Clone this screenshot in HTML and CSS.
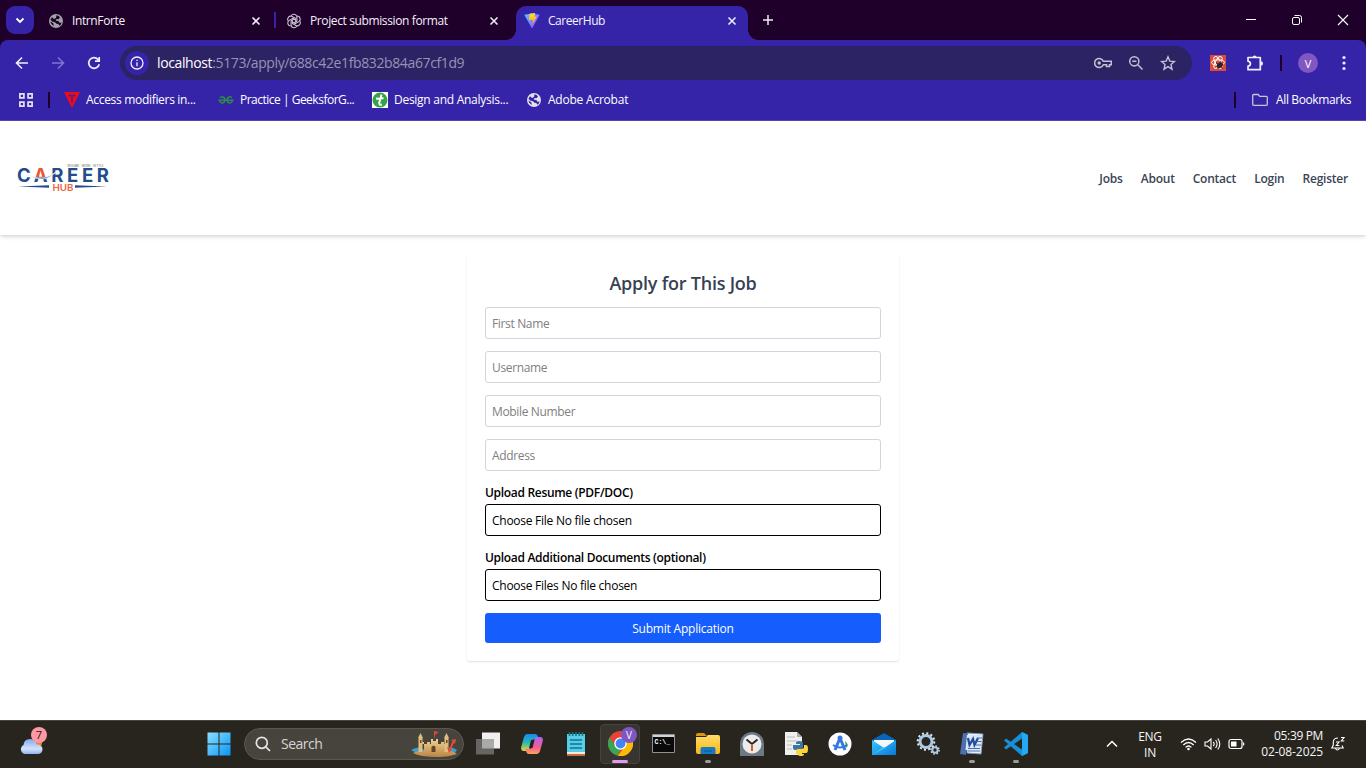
FILE: index.html
```html
<!DOCTYPE html>
<html lang="en">
<head>
<meta charset="utf-8">
<title>CareerHub</title>
<link rel="stylesheet" href="styles.css">
</head>
<body>
<svg class="defs" width="0" height="0" aria-hidden="true">
  <defs>
    <linearGradient id="win" x1="0" y1="0" x2="1" y2="1"><stop offset="0" stop-color="#8be0ff"/><stop offset="1" stop-color="#0795f8"/></linearGradient>
    <linearGradient id="vite" x1="0" y1="0" x2="1" y2="1"><stop offset="0" stop-color="#41d1ff"/><stop offset="1" stop-color="#bd34fe"/></linearGradient>
    <linearGradient id="bolt" x1="0" y1="0" x2="0" y2="1"><stop offset="0" stop-color="#ffdf45"/><stop offset="1" stop-color="#ffa800"/></linearGradient>
    <linearGradient id="cloud" x1="0" y1="0" x2="0" y2="1"><stop offset="0" stop-color="#7fa9ee"/><stop offset=".65" stop-color="#d2e3fc"/><stop offset="1" stop-color="#8fb3ef"/></linearGradient>
    <linearGradient id="cop1" x1="0" y1="0" x2="0" y2="1"><stop offset="0" stop-color="#1689f0"/><stop offset=".5" stop-color="#28b7b5"/><stop offset="1" stop-color="#eed32e"/></linearGradient>
    <linearGradient id="cop2" x1="0" y1="0" x2="0" y2="1"><stop offset="0" stop-color="#ae62f4"/><stop offset=".6" stop-color="#f45b94"/><stop offset="1" stop-color="#ffa35c"/></linearGradient>
    <linearGradient id="sand" x1="0" y1="0" x2="0" y2="1"><stop offset="0" stop-color="#f0d190"/><stop offset="1" stop-color="#b98546"/></linearGradient>
    <linearGradient id="folder" x1="0" y1="0" x2="0" y2="1"><stop offset="0" stop-color="#ffdc67"/><stop offset="1" stop-color="#fbb716"/></linearGradient>
    <linearGradient id="mail" x1="0" y1="0" x2="1" y2="1"><stop offset="0" stop-color="#38c8fb"/><stop offset="1" stop-color="#0878d6"/></linearGradient>
    <linearGradient id="logo-a" gradientUnits="userSpaceOnUse" x1="0" y1="0" x2="0" y2="30"><stop offset=".47" stop-color="#e75a36"/><stop offset=".47" stop-color="#214d8c"/></linearGradient>
    <symbol id="globe" viewBox="0 0 16 16"><circle cx="8" cy="8" r="7" fill="currentColor"/><path d="M8.500 2.300q2.500.500 3.500 2.300l-1.500 1.700-2-.300-.800 1.500 3 .800 1 1.800 2-.500q-.600 2.200-2.200 3.200l-1.200-1.800-1.800-.200L7 9.300l-2.500-.500-2-2q.500-1.500 1.500-2.500l2 1.700L8 5z" fill="var(--globe-ink)"/><path d="M2.300 8.500l3 1.700.500 2.800q-2.800-1-3.500-4.500z" fill="var(--globe-ink)"/></symbol>
    <symbol id="close" viewBox="0 0 10 10"><path d="M1.500 1.500l7 7m0-7l-7 7" fill="none" stroke="#eeeaf5" stroke-width="1.600"/></symbol>
  </defs>
</svg>

<div class="screen">
  <div class="tabstrip">
    <button class="tab-search" aria-label="Search tabs"><svg width="10" height="7" viewBox="0 0 10 7"><path d="M1.500 1.500L5 5l3.500-3.500" fill="none" stroke="#fff" stroke-width="1.800"/></svg></button>
    <div class="tab first">
      <svg class="fav grey" width="16" height="16"><use href="#globe"/></svg>
      <span class="t1">IntrnForte</span>
      <svg class="x" width="10" height="10"><use href="#close"/></svg>
    </div>
    <div class="tab second">
      <svg class="fav" width="16" height="16" viewBox="-8 -8 16 16" fill="none" stroke="#ccc5d5" stroke-width="1.100">
        <g id="petal"><path d="M-2.800-5.300a3.100 3.100 0 0 1 5.700 1V.300L0 1.900"/></g>
        <use href="#petal" transform="rotate(60)"/><use href="#petal" transform="rotate(120)"/><use href="#petal" transform="rotate(180)"/><use href="#petal" transform="rotate(240)"/><use href="#petal" transform="rotate(300)"/>
      </svg>
      <span class="t2">Project submission format</span>
      <svg class="x" width="10" height="10"><use href="#close"/></svg>
    </div>
    <div class="tab active">
      <svg class="fav" width="16" height="16" viewBox="0 0 16 16"><path d="M.300 1.800L8 .500l7.700 1.300L8 15.500z" fill="url(#vite)"/><path d="M5.500.800l5.700-.800-.800 3.500 2.300.200-4.200 7.300.400-4.200-4 .300z" fill="url(#bolt)"/></svg>
      <span class="t3">CareerHub</span>
      <svg class="x" width="10" height="10"><use href="#close"/></svg>
    </div>
    <svg class="newtab" width="12" height="12" viewBox="0 0 12 12"><path d="M6 1v10M1 6h10" stroke="#eeeaf5" stroke-width="1.500"/></svg>
    <div class="window-buttons">
      <svg width="12" height="12" viewBox="0 0 12 12"><path d="M1 5.500h10" stroke="#fff"/></svg>
      <svg width="12" height="12" viewBox="0 0 12 12" fill="none" stroke="#fff"><rect x="1.500" y="3.500" width="7" height="7" rx="1.500"/><path d="M3.500 1.500h5a2 2 0 0 1 2 2v5"/></svg>
      <svg width="12" height="12" viewBox="0 0 12 12"><path d="M1 1l10 10M11 1L1 11" stroke="#fff" stroke-width="1.100"/></svg>
    </div>
  </div>

  <div class="chrome">
    <div class="toolbar">
      <div class="nav-buttons">
        <svg width="16" height="16" viewBox="0 0 16 16" fill="none" stroke="#f1eefb" stroke-width="1.600"><path d="M14 8H3M8 2.500L2.500 8 8 13.500"/></svg>
        <svg width="16" height="16" viewBox="0 0 16 16" fill="none" stroke="#8175ce" stroke-width="1.600"><path d="M2 8h11M8 2.500L13.500 8 8 13.500"/></svg>
        <svg width="16" height="16" viewBox="0 0 16 16" fill="none" stroke="#f1eefb" stroke-width="1.700"><path d="M13.200 9.200A5.300 5.300 0 1 1 12 4.500l1 1.200M13.200 2v4.200H9"/></svg>
      </div>
      <div class="omnibox">
        <span class="site-info"><svg width="14" height="14" viewBox="0 0 14 14" fill="none" stroke="#f1eefb" stroke-width="1.300"><circle cx="7" cy="7" r="6"/><path d="M7 6.200V10.200M7 3.700v1.400"/></svg></span>
        <span class="url"><b>localhost</b>:5173/apply/688c42e1fb832b84a67cf1d9</span>
        <span class="omni-icons">
          <svg width="18" height="12" viewBox="0 0 18 12" fill="none" stroke="#c4c0d2" stroke-width="1.500"><path d="M9.300 4.300A4.500 4.500 0 1 0 9.300 7.700h3.200v1.800h3V7.700h1.800V4.300z"/><circle cx="5.200" cy="6" r="1.700" fill="#c4c0d2" stroke="none"/></svg>
          <svg width="16" height="16" viewBox="0 0 16 16" fill="none" stroke="#c4c0d2" stroke-width="1.500"><circle cx="6.300" cy="6.300" r="4.600"/><path d="M9.800 9.800l4.700 4.700M4.200 6.300h4.200"/></svg>
          <svg width="16" height="16" viewBox="0 0 16 16" fill="none" stroke="#c4c0d2" stroke-width="1.400"><path d="M8 1.800l1.800 4.300 4.700.400-3.500 3.100 1 4.600-4-2.500-4 2.500 1-4.600L1.500 6.500l4.700-.400z"/></svg>
        </span>
      </div>
      <svg class="ext" width="16" height="16" viewBox="0 0 16 16"><path fill="#dc4a3c" d="M0 0h16v16H0z"/><g fill="none" stroke="#fff" stroke-width="1"><ellipse cx="8" cy="7.500" rx="6.500" ry="2.700"/><ellipse cx="8" cy="7.500" rx="6.500" ry="2.700" transform="rotate(60 8 7.500)"/><ellipse cx="8" cy="7.500" rx="6.500" ry="2.700" transform="rotate(120 8 7.500)"/></g><ellipse cx="9.800" cy="10.300" rx="3.400" ry="2.500" fill="#28222b" transform="rotate(-35 9.800 10.300)"/><path d="M6 7.500l7 6M8 13l3-7" stroke="#28222b"/></svg>
      <svg class="puzzle" width="18" height="18" viewBox="0 0 18 18" fill="none" stroke="#f1eefb" stroke-width="1.700"><path d="M2 3.500h12.300v12.200H2v-3.500q2.400-.500 2.400-2.500T2 7.200z" stroke-linejoin="round"/><path d="M6.500 3a2.200 2.200 0 0 1 4.200 0zM14.800 7.300a2.200 2.200 0 0 1 0 4.400z" fill="#f1eefb" stroke="none"/></svg>
      <span class="bar"></span>
      <span class="avatar">V</span>
      <svg class="dots" width="4" height="16" viewBox="0 0 4 16" fill="#f1eefb"><circle cx="2" cy="2.500" r="1.600"/><circle cx="2" cy="8" r="1.600"/><circle cx="2" cy="13.500" r="1.600"/></svg>
    </div>
    <div class="bookmarks">
      <svg class="apps" width="16" height="16" viewBox="0 0 16 16" fill="none" stroke="#e6e2f3" stroke-width="1.700"><path d="M1.900 1.900h4v4h-4zM10.100 1.900h4v4h-4zM1.900 10.100h4v4h-4zM10.100 10.100h4v4h-4z"/></svg>
      <span class="bar"></span>
      <span class="bm b1"><svg width="16" height="16" viewBox="0 0 16 16"><path d="M0 0h16L8 16z" fill="#f50a14"/><path d="M4.500 3.500h7M8 3.500v7" stroke="#3524a8" stroke-width="1.500"/></svg><span>Access modifiers in...</span></span>
      <span class="bm b2"><svg width="16" height="16" viewBox="0 0 16 16" fill="none" stroke="#2f8d46" stroke-width="1.400"><path d="M.500 8.300h15M2 5.600Q3.200 4.700 5 5q2 .600 1.900 3.400Q6.500 11 4.200 11 1.800 10.800 1.600 8.300M14 5.600Q12.800 4.700 11 5q-2 .600-1.900 3.400Q9.500 11 11.800 11q2.400-.200 2.600-2.700"/></svg><span>Practice | GeeksforG...</span></span>
      <span class="bm b3"><svg width="16" height="16" viewBox="0 0 16 16"><path fill="#fff" d="M0 0h16v16H0z"/><circle cx="8" cy="8" r="7.500" fill="#35a447"/><path d="M9.500 2.500L7.300 10.500q-.500 2.700 2.500 2M4 6.500q4 .500 7.500-.500" fill="none" stroke="#fff" stroke-width="2"/></svg><span>Design and Analysis...</span></span>
      <span class="bm b4"><svg class="light" width="16" height="16"><use href="#globe"/></svg><span>Adobe Acrobat</span></span>
      <span class="bar far"></span>
      <span class="bm all"><svg width="16" height="14" viewBox="0 0 16 14" fill="none" stroke="#c7c3d5" stroke-width="1.300"><path d="M1.700 1.500h4.500l1.500 1.800h6.600q1 0 1 1v7q0 1-1 1H1.700q-1 0-1-1v-8.800q0-1 1-1z"/></svg><span>All Bookmarks</span></span>
    </div>
  </div>

  <main class="page">
    <header class="site-header">
      <svg class="logo" width="92" height="30" viewBox="0 0 92 30">
        <g font-family="Inter, sans-serif" font-weight="700">
          <text x="0" y="18.500" font-size="18.500" fill="#214d8c" textLength="92" lengthAdjust="spacing">C<tspan fill="url(#logo-a)">A</tspan>REER</text>
          <text x="35.500" y="27.500" font-size="9.500" font-weight="600" fill="#e9653f" textLength="21" lengthAdjust="spacingAndGlyphs">HUB</text>
          <text x="50.500" y="3.500" font-size="3" font-weight="500" fill="#777" textLength="36" lengthAdjust="spacingAndGlyphs">RESUME · WORK · SETTLE</text>
        </g>
        <path d="M13 12.500q14 7 28-5-10 9-16 8.500-7 0-12-3.500z" fill="#214d8c" stroke="#fff" stroke-width=".700"/>
        <path d="M1 23.500l31-1.200v2.400zM90 23.500l-32-1.200v2.400z" fill="#214d8c"/>
      </svg>
      <nav class="site-nav"><a>Jobs</a><a>About</a><a>Contact</a><a>Login</a><a>Register</a></nav>
    </header>
    <form class="card">
      <h2>Apply for This Job</h2>
      <input type="text" placeholder="First Name">
      <input type="text" placeholder="Username">
      <input type="text" placeholder="Mobile Number">
      <input type="text" placeholder="Address">
      <div class="upload"><label>Upload Resume (PDF/DOC)</label><div class="file">Choose File No file chosen</div></div>
      <div class="upload"><label>Upload Additional Documents (optional)</label><div class="file">Choose Files No file chosen</div></div>
      <button class="submit" type="button">Submit Application</button>
    </form>
  </main>

  <footer class="taskbar">
    <div class="weather">
      <svg width="26" height="20" viewBox="0 0 26 20"><circle cx="19" cy="7" r="5" fill="#ed8527"/><path d="M6 18a5 5 0 0 1-.500-9Q6 3 12 3q5 0 6.500 5.200 6 .300 6 5 0 4.800-5 4.800z" fill="url(#cloud)"/></svg>
      <span class="count">7</span>
    </div>
    <div class="cell start"><svg width="24" height="24" viewBox="0 0 24 24" fill="url(#win)"><path d="M.500.500h11v11H.500zM12.500.500h11v11h-11zM.500 12.500h11v11H.500zM12.500 12.500h11v11h-11z"/></svg></div>
    <div class="search">
      <svg width="16" height="16" viewBox="0 0 16 16" fill="none" stroke="#e6e5e3" stroke-width="1.700"><circle cx="6.800" cy="6.800" r="5.500"/><path d="M10.800 10.800l4.200 4.200"/></svg>
      <span>Search</span>
      <svg class="castle" width="48" height="28" viewBox="0 0 48 28"><path d="M1 20q8-5 14 0l-3 6zM32 20q9-5 15 0l-4 5z" fill="#3e9fcf"/><path d="M3 23q6-3 8-1l3-1V14H12v-2h2v2h3v-2h3v2h1V9h2v2h3V9h2v5h3v-2h3v2h3v7q7 0 10 3-8 3-19 3-18 0-25-4z" fill="url(#sand)"/><path d="M8.500 22V8h-.500L10.500 3 13 8h-.500v14zM34.500 22V8H34l2.500-5L39 8h-.500v14z" fill="#dfbd7d"/><path d="M10 10h1.500v3H10zM36 10h1.500v3H36zM21.500 22v-5q2-2.500 4 0v5z" fill="#694329"/><path d="M24 10V1l5 1-4 3z" fill="#d44a35"/><path d="M43 12l-3 8" stroke="#ec4e36" stroke-width="2"/><path d="M41 10l5-1-1 5zM37 17l5 2-3 4z" fill="#e74a32"/></svg>
    </div>
    <div class="apps-row">
      <div class="cell"><svg width="24" height="24" viewBox="0 0 24 24"><path d="M6 .500h18v16H6z" fill="#f0f0f0"/><path d="M0 7h18v15.500H0z" fill="#666563"/><path d="M6 7h12v9.500H6z" fill="#aaa"/></svg></div>
      <div class="cell"><svg width="24" height="24" viewBox="0 0 24 24"><path d="M7 2h8q2 0 2.700 2l.8 3h-4q-2 0-2.700 2l-2 7q-.800 3-3.300 3H4q-3.500 0-2.800-4L4 5q1-3 3-3z" fill="url(#cop1)"/><path d="M17 22H9q-2 0-2.700-2l-.800-3h4q2 0 2.700-2l2-7q.800-3 3.300-3H20q3.500 0 2.800 4L20 19q-1 3-3 3z" fill="url(#cop2)"/><path d="M11 8h3.500l-2 8H9z" fill="#272420"/></svg></div>
      <div class="cell"><svg width="20" height="26" viewBox="0 0 20 26"><path d="M1 22h18v3H1z" fill="#c56f35"/><path d="M1 19h18v4H1z" fill="#f5e8dc"/><path d="M1 3h18v18H1z" fill="#55cce8"/><path d="M4 9h12M4 13h12M4 17h12" stroke="#147389" stroke-width="1.600"/><path d="M3.500 1v4m3.200-4v4M10 1v4m3.300-4v4m3.200-4v4" stroke="#147389" stroke-width="1.500"/></svg></div>
      <div class="cell selected"><svg width="25" height="25" viewBox="0 0 24 24"><circle cx="12" cy="12" r="12" fill="#e94335"/><path d="M1.600 6L7 15l5 3-3 5.600A12 12 0 0 1 1.600 6z" fill="#34a853"/><path d="M12 6.500h10.700A12 12 0 0 1 9.500 23.800L17 14z" fill="#fbbc05"/><circle cx="12" cy="12" r="6" fill="#fff"/><circle cx="12" cy="12" r="4.700" fill="#4285f4"/></svg><span class="profile">V</span><i class="run pink"></i></div>
      <div class="cell"><svg width="24" height="20" viewBox="0 0 24 20"><path d="M.500.500h22v18H.500z" fill="#0a0a0a" stroke="#909090"/><path d="M1 1h21v2H1z" fill="#cfd4d9"/><text x="2.500" y="9.500" font-family="Liberation Mono, monospace" font-size="6.500" font-weight="700" fill="#fff">C:\_</text></svg></div>
      <div class="cell"><svg width="24" height="24" viewBox="0 0 24 24"><path d="M0 3q0-2 2-2h6l3 3H0z" fill="#d79614"/><path d="M0 5h10l2-2h10q2 0 2 2v15q0 2-2 2H2q-2 0-2-2z" fill="url(#folder)"/><path d="M4.500 22v-5q0-2 2-2h11q2 0 2 2v5z" fill="#1779c3"/><path d="M8 19h8" stroke="#075895"/></svg><i class="run"></i></div>
      <div class="cell"><svg width="26" height="26" viewBox="0 0 26 26"><path d="M1 13a12 12 0 0 1 24 0v12H1z" fill="#6e7983"/><circle cx="13" cy="13" r="9.500" fill="#ecebea"/><path d="M7.500 8.500l5.500 4.500 5.500-4.500" fill="none" stroke="#26292b" stroke-width="2"/><path d="M13 13v7" stroke="#dd5b26" stroke-width="2"/></svg></div>
      <div class="cell"><svg width="24" height="26" viewBox="0 0 24 26"><path d="M1 1h12l5 5v18H1z" fill="#efefed"/><path d="M13 1l5 5h-5z" fill="#aaa"/><path d="M3 6h8M3 10h10M3 14h5M3 18h5" stroke="#bbb"/><path d="M9 14v3q0 2 2 2h6q2 0 2-2v-5q0-2-4-2-3 0-3 2v1h4v1z" fill="#3976a8"/><path d="M12 23v-3q0-2 2-2h4q2 0 2-2v-2h2q2 0 2 4t-2 4h-4v1h2q0 2-3 2t-3-2z" fill="#ffd43b"/></svg></div>
      <div class="cell"><svg width="26" height="26" viewBox="0 0 26 26"><circle cx="13" cy="13" r="11.500" fill="#fff"/><path d="M18 10q5 4 1 7z" fill="#35a853"/><path d="M13 7L8 19M13 7l5 12" fill="none" stroke="#3577df" stroke-width="3"/><path d="M6 14q7 5 14 0" fill="none" stroke="#3577df" stroke-width="2"/><circle cx="13" cy="7" r="2.500" fill="#3577df"/></svg></div>
      <div class="cell"><svg width="26" height="24" viewBox="0 0 26 24"><path d="M1 8l12-7 12 7v14H1z" fill="#0866b5"/><path d="M3 8h20v10H3z" fill="#f4f7fa"/><path d="M1 8l12 8 12-8v15H1z" fill="url(#mail)"/><path d="M1 23l11-8 2 1z" fill="#3dc6f7"/></svg></div>
      <div class="cell"><svg width="26" height="26" viewBox="0 0 26 26" fill="none"><circle cx="11" cy="10.500" r="6" stroke="#a9cae5" stroke-width="3"/><circle cx="11" cy="10.500" r="8.300" stroke="#dceaf4" stroke-width="2" stroke-dasharray="2 2.350"/><circle cx="20" cy="19" r="2.700" stroke="#a9cae5" stroke-width="2"/><circle cx="20" cy="19" r="4.200" stroke="#dceaf4" stroke-width="1.300" stroke-dasharray="1.500 1.800"/></svg></div>
      <div class="cell"><svg width="26" height="26" viewBox="0 0 26 26"><path d="M8 2l16 1-2 20-14-1z" fill="#e9f0fa" stroke="#8198bd"/><path d="M4 2l5 .500L7 24l-6-1z" fill="#4b6faf"/><path d="M8 4h15l-1.500 15H6.500z" fill="#dbe6f6"/><path d="M9 7l1.500 7L14 8l1.500 6L19 7" fill="none" stroke="#214c95" stroke-width="2.200"/><path d="M18 7h5M17.500 10.500h5M17 14h5M9 17.500h12M9 20h12" stroke="#4a6fae"/></svg><i class="run"></i></div>
      <div class="cell"><svg width="26" height="26" viewBox="0 0 26 26"><path d="M19 1l6 3v18l-6 3L1 9.500l2-2 16 11v-11L3 18.500l-2-2z" fill="#168ed8"/><path d="M19 1l6 3v18l-6 3z" fill="#24a8f2"/></svg><i class="run"></i></div>
    </div>
    <svg class="chev" width="12" height="8" viewBox="0 0 12 8"><path d="M1 6.500l5-5 5 5" fill="none" stroke="#fff" stroke-width="1.500"/></svg>
    <div class="lang">ENG<br>IN</div>
    <div class="tray">
      <svg width="17" height="14" viewBox="0 0 17 14" fill="none" stroke="#fff" stroke-width="1.300"><path d="M1 5.500q7.500-7 15 0M3.300 8q5.200-5 10.400 0M5.600 10.400q2.900-2.800 5.800 0"/><circle cx="8.500" cy="12" r="1.300" fill="#fff" stroke="none"/></svg>
      <svg width="17" height="14" viewBox="0 0 17 14" fill="none" stroke="#fff" stroke-width="1.100"><path d="M1 5h2.500L7 2v10L3.500 9H1zM9.300 4.800q1.700 2.200 0 4.400M11.600 3q3 4 0 8M13.800 1.500q4 5.500 0 11"/></svg>
      <svg width="17" height="12" viewBox="0 0 17 12"><rect x="1" y="1.500" width="13" height="9" rx="2" fill="none" stroke="#fff" stroke-width="1.200"/><path d="M3 3.500h5.500v5H3zM15 4.500h1.200v3H15z" fill="#fff"/></svg>
    </div>
    <div class="clock"><span class="time">05:39 PM</span><br><span class="date">02-08-2025</span></div>
    <svg class="bell" width="16" height="16" viewBox="0 0 16 16" fill="none" stroke="#fff" stroke-width="1.100"><path d="M8 2Q3.500 2 3.300 6v3L1.800 12h11.400L12 9.500M5.500 12.500q1.500 3 4 0M6 6h3L6.300 9.500h3M11 1.500h3L11.300 5h3"/></svg>
  </footer>
</div>
</body>
</html>
```
FILE: styles.css
```css
* { box-sizing: border-box; }
body { margin: 0; background: #fff; font-family: "Open Sans", "Noto Sans", sans-serif; font-size: 12px; overflow: hidden; }
svg { flex: none; display: block; }
.defs { position: absolute; }
.screen { width: 1366px; height: 768px; display: flex; flex-direction: column; background: #1f002b; }

.tabstrip { height: 40px; display: flex; align-items: flex-start; color: #f4f1f8; white-space: nowrap; }
.tab-search { width: 28px; height: 28px; margin: 6px 0 0 6px; border: 0; padding: 0; border-radius: 9px; background: #3524a8; display: flex; align-items: center; justify-content: center; }
.tab { height: 34px; margin-top: 6px; display: flex; align-items: center; padding-bottom: 5px; }
.tab .fav { margin-right: 8px; }
.tab .x { margin-left: auto; }
.first { width: 213px; margin-left: 14px; position: relative; }
.second { width: 213px; margin-left: 25px; }
.first::after { content: ""; position: absolute; right: -15px; top: 6px; width: 2px; height: 16px; background: #3524a8; }
.active { width: 232px; margin-left: 17px; padding: 0 11px 5px 8px; background: #3524a8; border-radius: 10px 10px 0 0; position: relative; }
.active::before, .active::after { content: ""; position: absolute; bottom: 0; width: 10px; height: 10px; }
.active::before { left: -10px; background: radial-gradient(circle at 0 0, transparent 9.500px, #3524a8 10px); }
.active::after { right: -10px; background: radial-gradient(circle at 100% 0, transparent 9.500px, #3524a8 10px); }
.newtab { margin: 14px 0 0 14px; }
.window-buttons { margin: 14px 17px 0 auto; display: flex; gap: 34px; }
.grey { color: #a0a2a6; --globe-ink: #1f002b; }
.light { color: #e3e1ea; --globe-ink: #3524a8; }
.t1 { letter-spacing: -.38px; }
.t2 { letter-spacing: -.38px; }
.t3 { letter-spacing: -.45px; }

.chrome { height: 81px; background: #3524a8; border-radius: 8px 8px 0 0; border-bottom: 1px solid #5646b9; color: #fff; white-space: nowrap; }
.toolbar { height: 46px; display: flex; align-items: center; }
.nav-buttons { display: flex; gap: 20px; margin-left: 14px; width: 106px; }
.omnibox { width: 1072px; height: 34px; border-radius: 17px; background: #2b2363; display: flex; align-items: center; }
.site-info { width: 24px; height: 24px; margin-left: 5px; border-radius: 50%; background: #3524a8; display: flex; align-items: center; justify-content: center; }
.url { margin-left: 8px; margin-top: -1px; font-size: 14px; letter-spacing: -.38px; color: #9793b6; }
.url b { font-weight: 400; color: #fff; }
.omni-icons { display: flex; align-items: center; gap: 16px; margin: 0 16px 0 auto; }
.ext { margin-left: 18px; }
.puzzle { margin-left: 20px; }
.toolbar .bar { margin-left: 16px; }
.bar { width: 2px; height: 16px; background: #1f002b; }
.avatar { width: 20px; height: 20px; margin-left: 16px; border-radius: 50%; background: #8157c1; display: flex; align-items: center; justify-content: center; font-size: 11px; }
.dots { margin-left: 24px; }
.bookmarks { height: 28px; display: flex; align-items: center; }
.bm { display: flex; align-items: center; gap: 6px; }
.bm > span { margin-top: -1px; }
.apps { margin: 0 14px 0 18px; }
.b1 { margin-left: 14px; width: 154px; letter-spacing: -.31px; }
.b2 { width: 154px; letter-spacing: -.5px; }
.b3 { width: 154px; letter-spacing: -.27px; }
.b4 { letter-spacing: -.22px; }
.far { margin-left: auto; margin-right: 16px; }
.all { margin-right: 14px; gap: 8px; width: 100px; letter-spacing: -.37px; }

.page { height: 599px; background: #fff; }
.site-header { height: 114px; display: flex; align-items: center; justify-content: space-between; padding: 0 18px; box-shadow: 0 3px 5px -1px rgba(0,0,0,.1), 0 1px 3px rgba(0,0,0,.1); }
.logo { margin-left: -1px; }
.site-nav { display: flex; gap: 18px; font-weight: 600; color: #3b4555; letter-spacing: -.22px; }
.card { width: 432px; margin: 18px auto 0; padding: 18px; display: flex; flex-direction: column; border-radius: 3px; box-shadow: 0 1px 2px rgba(0,0,0,.13); }
.card h2 { margin: 0 0 12px; height: 24px; line-height: 25px; font-size: 18px; font-weight: 600; letter-spacing: -.23px; text-align: center; color: #364153; }
.card input, .file { width: 396px; height: 32px; border: 1px solid #d1d5dc; border-radius: 3px; padding: 1px 6px 0; background: #fff; font: 12px "Open Sans", "Noto Sans", sans-serif; letter-spacing: -.35px; }
.card input { margin-bottom: 12px; }
.card input::placeholder { color: #808080; opacity: 1; }
.upload { display: flex; flex-direction: column; gap: 3px; margin-bottom: 12px; }
.upload label { height: 18px; line-height: 19px; font-weight: 600; letter-spacing: -.31px; }
.file { border-color: #000; line-height: 30px; letter-spacing: -.26px; }
.submit { height: 30px; border: 0; border-radius: 3px; padding: 0; background: #155dfc; color: #fff; font: 12px "Open Sans", "Noto Sans", sans-serif; letter-spacing: -.22px; }

.taskbar { height: 48px; padding-bottom: 2px; background: #28251f; border-top: 1px solid #48453f; display: flex; align-items: center; color: #f6f5f4; }
.weather { position: relative; width: 28px; margin: 4px 150px 0 19px; }
.weather svg { margin-left: -1px; }
.count { position: absolute; left: 12px; top: -9px; width: 16px; height: 16px; border-radius: 50%; background: #ff98a3; color: #28141a; font-size: 11px; line-height: 16px; text-align: center; }
.cell { width: 44px; height: 40px; display: flex; align-items: center; justify-content: center; position: relative; }
.search { width: 220px; height: 32px; margin: 0 2px 0 3px; padding: 0 5px 0 10px; border-radius: 16px; background: #47443e; border: 1px solid #5b5852; display: flex; align-items: center; font-size: 14px; letter-spacing: -.5px; color: #d7d5d1; }
.search span { margin-left: 10px; }
.castle { margin-left: auto; }
.apps-row { display: flex; }
.selected::before { content: ""; position: absolute; inset: 0 2px; border: 1px solid #46433e; border-radius: 4px; background: #383530; }
.selected svg { position: relative; }
.profile { position: absolute; right: 5px; top: 3px; width: 16px; height: 16px; border-radius: 50%; background: #7e57c2; font-size: 10px; line-height: 16px; text-align: center; }
.run { position: absolute; bottom: 1px; left: 19px; width: 6px; height: 3px; border-radius: 2px; background: #9d9b98; }
.pink { left: 14px; width: 16px; background: #e19be9; }
.chev { margin-left: 68px; }
.lang { width: 36px; margin-left: 14px; padding-top: 2px; text-align: center; line-height: 16px; letter-spacing: -.3px; }
.tray { display: flex; align-items: center; gap: 7px; margin-left: 12px; }
.clock { width: 70px; margin-left: 8px; text-align: right; line-height: 16px; white-space: nowrap; }
.time { letter-spacing: -.35px; }
.date { letter-spacing: -.08px; }
.bell { margin-left: 7px; }
```
